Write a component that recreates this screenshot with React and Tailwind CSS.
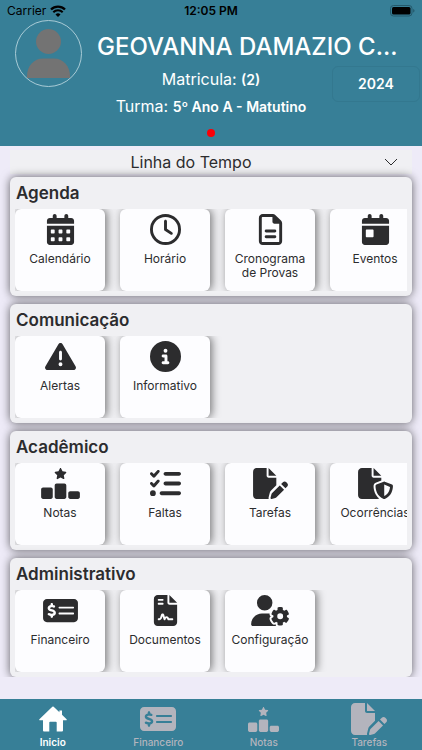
import React from 'react';
import {
  FaCalendarDays,
  FaCalendarDay,
  FaRegClock,
  FaRegFileLines,
  FaTriangleExclamation,
  FaCircleInfo,
  FaRankingStar,
  FaListCheck,
  FaFilePen,
  FaFileShield,
  FaMoneyCheckDollar,
  FaFileContract,
  FaUserGear,
} from 'react-icons/fa6';

const sections = [
  {
    title: 'Agenda',
    items: [
      { label: 'Calendário', icon: FaCalendarDays },
      { label: 'Horário', icon: FaRegClock },
      { label: 'Cronograma de Provas', icon: FaRegFileLines },
      { label: 'Eventos', icon: FaCalendarDay },
    ],
  },
  {
    title: 'Comunicação',
    items: [
      { label: 'Alertas', icon: FaTriangleExclamation },
      { label: 'Informativo', icon: FaCircleInfo },
    ],
  },
  {
    title: 'Acadêmico',
    items: [
      { label: 'Notas', icon: FaRankingStar },
      { label: 'Faltas', icon: FaListCheck },
      { label: 'Tarefas', icon: FaFilePen },
      { label: 'Ocorrências', icon: FaFileShield },
    ],
  },
  {
    title: 'Administrativo',
    items: [
      { label: 'Financeiro', icon: FaMoneyCheckDollar },
      { label: 'Documentos', icon: FaFileContract },
      { label: 'Configuração', icon: FaUserGear },
    ],
  },
];

function HomeIcon({ className }) {
  return (
    <svg viewBox="0 0 28 26" fill="currentColor" className={className} aria-hidden="true">
      <path d="M13.300.8a1 1 0 0 1 1.400 0l5.700 5.400V4.600H23v4.200l4.600 4.400c.4.400.1 1-.4 1H24v10.300a1 1 0 0 1-1 1h-5.300V16.500a.8.8 0 0 0-.8-.8h-5.800a.8.8 0 0 0-.8.800v9H5a1 1 0 0 1-1-1V14.200H.8c-.5 0-.8-.6-.4-1z" />
    </svg>
  );
}

const tabs = [
  { label: 'Inicio', icon: HomeIcon, size: 'h-[26px] w-[28px]', active: true },
  { label: 'Financeiro', icon: FaMoneyCheckDollar, size: 'h-8 w-9' },
  { label: 'Notas', icon: FaRankingStar, size: 'h-[25px] w-[31px]' },
  { label: 'Tarefas', icon: FaFilePen, size: 'h-8 w-9' },
];

function StatusBar() {
  return (
    <div className="grid h-5 grid-cols-3 items-center px-[7px] pt-0.5 text-xs text-black">
      <div className="flex items-center gap-1">
        <span>Carrier</span>
        <svg viewBox="0 0 16 12" className="h-3 w-4" fill="none" stroke="currentColor" aria-hidden="true">
          <path d="M1 4.500a10 10 0 0 1 14 0" strokeWidth="2.400" />
          <path d="M3.300 7.300a6.600 6.600 0 0 1 9.400 0" strokeWidth="2" />
          <path d="M5.500 9.400a3.600 3.600 0 0 1 5 0L8 11.900z" fill="currentColor" stroke="none" />
        </svg>
      </div>
      <span className="text-center font-semibold">12:05 PM</span>
      <svg viewBox="0 0 25 12" className="h-3 w-[25px] justify-self-end" aria-hidden="true">
        <rect x=".5" y=".5" width="21.500" height="10.500" rx="3" fill="none" stroke="#24596b" />
        <rect x="2" y="2" width="18.500" height="7.500" rx="1.500" />
        <path d="M23.200 4v3.500c.9-.3 1.300-.9 1.300-1.700s-.4-1.500-1.300-1.800z" fill="#24596b" />
      </svg>
    </div>
  );
}

function Header() {
  return (
    <header className="bg-[#377f97] text-white">
      <StatusBar />
      <div className="grid grid-cols-[90px_1fr_90px]">
        <div className="row-span-3 ml-[15px] size-[67px] rounded-full border border-[#a9cbd6]">
          <svg viewBox="0 0 65 65" fill="#737373" className="size-full" aria-hidden="true">
            <circle cx="32.500" cy="20.500" r="12.500" />
            <path d="M11 57v-2c0-10 7-17.500 16-17.500h11c9 0 16 7.500 16 17.500v2z" />
          </svg>
        </div>
        <h1 className="col-span-2 truncate pt-[11px] pl-[7px] text-2xl leading-8 font-medium">
          GEOVANNA DAMAZIO C...
        </h1>
        <p className="pt-1 text-center text-base leading-6">
          Matricula: <span className="text-sm font-semibold">(2)</span>
        </p>
        <button
          type="button"
          className="row-span-2 mt-[3px] mr-0.5 h-9 rounded-md border border-[#33788f] text-sm font-semibold"
        >
          2024
        </button>
        <p className="pt-[3px] text-center text-base leading-6 whitespace-nowrap">
          Turma: <span className="text-sm font-semibold">5º Ano A - Matutino</span>
        </p>
      </div>
      <div className="flex justify-center pt-[11px] pb-[9px]">
        <span className="size-2 rounded-full bg-[#fb0007]" />
      </div>
    </header>
  );
}

function Tile({ label, icon: Icon }) {
  return (
    <button
      type="button"
      className="flex h-[82px] w-[90px] shrink-0 flex-col items-center gap-[7px] rounded-md bg-[#fdfdff] pt-[5px] text-xs leading-[14px] shadow-[2px_0_8px_rgba(0,0,0,0.5)]"
    >
      <Icon className="h-[31px] w-[39px] shrink-0" />
      <span className="px-2">{label}</span>
    </button>
  );
}

function Section({ title, items }) {
  return (
    <section className="rounded-md bg-[#f0f0f3] px-[5px] pb-[5px] shadow-[0_0_10px_rgba(0,0,0,0.6)]">
      <h2 className="py-1 pl-px text-[17px] leading-6 font-semibold">{title}</h2>
      <div className="flex gap-[15px] overflow-hidden">
        {items.map((item) => (
          <Tile key={item.label} {...item} />
        ))}
      </div>
    </section>
  );
}

function TabBar() {
  return (
    <nav className="mt-auto grid grid-cols-4 bg-[#377f97] pt-1 pb-px">
      {tabs.map(({ label, icon: Icon, size, active }) => (
        <button
          key={label}
          type="button"
          className={`flex flex-col items-center text-[10px] leading-[14px] ${
            active ? 'font-semibold text-white' : 'font-medium text-[#b3b4bd]'
          }`}
        >
          <span className="flex h-8 items-center">
            <Icon className={size} />
          </span>
          {label}
        </button>
      ))}
    </nav>
  );
}

export default function App() {
  return (
    <div className="flex min-h-screen flex-col bg-[#eeebf8] font-['Inter',sans-serif] text-[#2c2c2e]">
      <Header />
      <main className="overflow-hidden px-2.5 pt-1">
        <button
          type="button"
          className="flex w-full items-center bg-[#f0f0f3] pr-[14px] text-base leading-6"
        >
          <span className="flex-1 pr-3 text-center">Linha do Tempo</span>
          <svg viewBox="0 0 14 8" className="h-2 w-3.5" fill="none" stroke="currentColor" aria-hidden="true">
            <path d="M1 1l6 6 6-6" />
          </svg>
        </button>
        <div className="flex flex-col gap-2 pt-[3px]">
          {sections.map((section) => (
            <Section key={section.title} {...section} />
          ))}
        </div>
      </main>
      <TabBar />
    </div>
  );
}
